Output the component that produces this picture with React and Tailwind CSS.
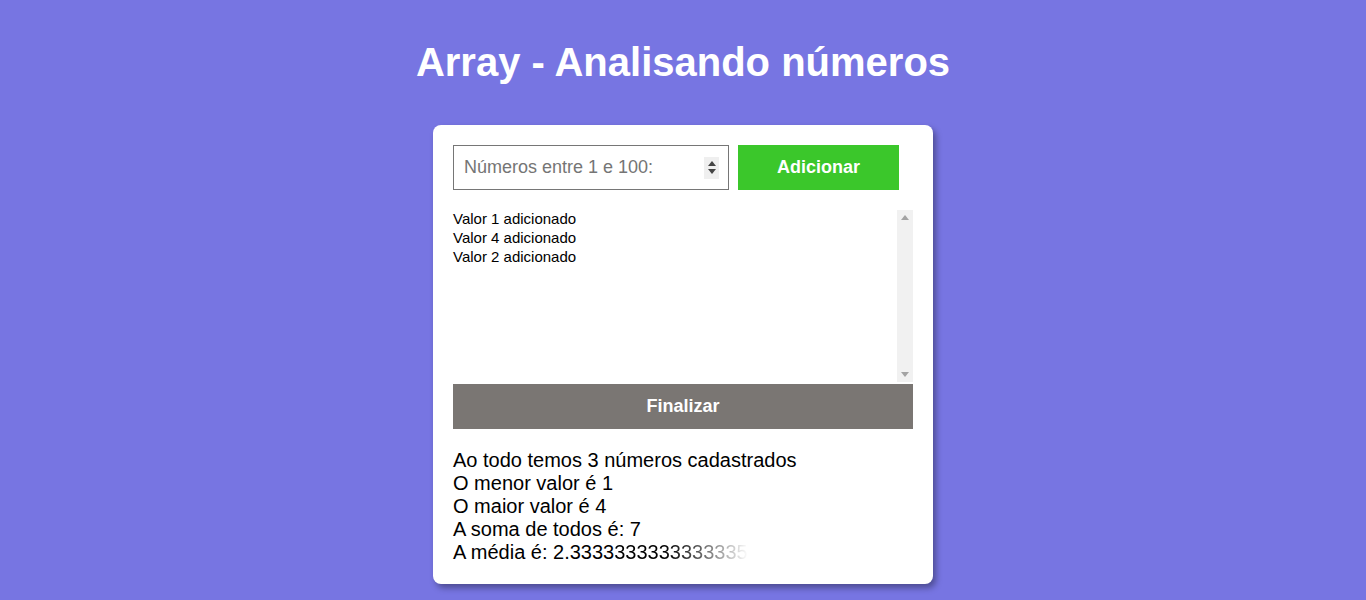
import { useState } from "react";

function Tri({ up, className }) {
  return (
    <svg width="8" height="5" viewBox="0 0 8 5" className={className}>
      <path d={up ? "M0 5 L4 0 L8 5 Z" : "M0 0 L4 5 L8 0 Z"} fill="currentColor" />
    </svg>
  );
}

export default function App() {
  const [valores] = useState([1, 4, 2]);

  return (
    <div className="min-h-screen bg-[#7775e2] font-['Liberation_Sans',Arial,sans-serif] text-black">
      {/* TITLE */}
      <h1 className="pt-[38px] text-center text-[40px] font-bold leading-[48px] text-white">
        Array - Analisando números
      </h1>

      {/* CARD */}
      <main className="mx-auto mt-[39px] w-[500px] rounded-lg bg-white p-5 shadow-[3px_4px_6px_rgba(0,0,0,0.35)]">
        <div className="flex gap-[9px]">
          <div className="flex h-[45px] w-[276px] items-center border border-[#767676] pr-[9px]">
            <input
              type="text"
              placeholder="Números entre 1 e 100:"
              className="min-w-0 flex-1 px-[10px] text-[18px] text-black outline-none placeholder:text-[#757575]"
            />
            <div className="flex h-[22px] w-[15px] flex-col items-center justify-center gap-[3px] bg-[#efefef] text-[#444]">
              <Tri up />
              <Tri />
            </div>
          </div>
          <button className="h-[45px] w-[161px] bg-[#3bc72b] text-[18px] font-bold text-white">
            Adicionar
          </button>
        </div>

        <div className="mt-[20px] flex h-[172px]">
          <div className="-mt-[1px] flex-1 text-[15px] leading-[19px]">
            {valores.map((v, i) => (
              <div key={i}>Valor {v} adicionado</div>
            ))}
          </div>
          <div className="flex w-[16px] flex-col items-center justify-between bg-[#f1f1f1] py-[5px] text-[#a3a3a3]">
            <Tri up />
            <Tri />
          </div>
        </div>

        <button className="mt-[2px] h-[45px] w-full bg-[#7a7673] text-[18px] font-bold text-white">
          Finalizar
        </button>

        <div className="mt-[20px] text-[20px] leading-[23px]">
          <p>Ao todo temos 3 números cadastrados</p>
          <p>O menor valor é 1</p>
          <p>O maior valor é 4</p>
          <p>A soma de todos é: 7</p>
          <p>
            A média é: 2.3333
            <span className="bg-linear-to-r from-black from-30% to-white bg-clip-text text-transparent">
              333333333335
            </span>
          </p>
        </div>
      </main>
    </div>
  );
}
